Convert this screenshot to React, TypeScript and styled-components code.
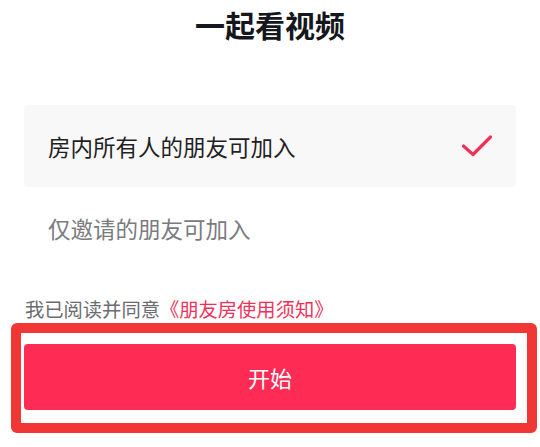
import React, { useState } from 'react';
import styled, { createGlobalStyle } from 'styled-components';

const GlobalStyle = createGlobalStyle`
    html, body {
        margin: 0;
        padding: 0;
        background: #ffffff;
    }
    body {
        font-family: "Noto Sans CJK SC", "Noto Sans", sans-serif;
    }
`;

const Page = styled.div`
    width: 540px;
    min-height: 447px;
    box-sizing: border-box;
    padding: 0 24px 37px;
`;

const Title = styled.h1`
    margin: 0;
    height: 48px;
    line-height: 48px;
    font-size: 30px;
    font-weight: 700;
    text-align: center;
    color: #16171d;
`;

const OptionList = styled.div`
    margin-top: 57px;
    display: flex;
    flex-direction: column;
`;

const Option = styled.div<{ $active: boolean }>`
    height: 82px;
    display: flex;
    align-items: center;
    justify-content: space-between;
    padding: 0 23px 0 24px;
    border-radius: 4px;
    background: ${p => (p.$active ? '#f8f8f8' : 'transparent')};
    color: ${p => (p.$active ? '#1f1f24' : '#7b7b80')};
    font-size: 22.5px;
    line-height: 1;
    cursor: pointer;
`;

const Agreement = styled.p`
    margin: 28px 0 0 1px;
    font-size: 19.3px;
    line-height: 24px;
    color: #6b6b70;
`;

const Link = styled.span`
    color: #f0325a;
`;

const ButtonWrap = styled.div`
    position: relative;
    margin-top: 23px;
`;

const StartButton = styled.button`
    display: block;
    width: 100%;
    height: 66px;
    border: none;
    border-radius: 4px;
    background: #fe2c55;
    color: #ffffff;
    font-family: inherit;
    font-size: 22px;
    cursor: pointer;
`;

const Highlight = styled.div`
    position: absolute;
    left: -13px;
    right: -21px;
    top: -21px;
    bottom: -23px;
    border: 10px solid #f23535;
    border-radius: 6px;
    pointer-events: none;
`;

function Check() {
    return (
        <svg width="32" height="24" viewBox="0 0 32 24" fill="none">
            <polyline
                points="2.5,12 12,20.5 29.5,3"
                stroke="#f0325a"
                strokeWidth="3.2"
                strokeLinecap="round"
                strokeLinejoin="round"
            />
        </svg>
    );
}

const options = ['房内所有人的朋友可加入', '仅邀请的朋友可加入'];

export default function App() {
    const [selected, setSelected] = useState(0);

    return (
        <Page>
            <GlobalStyle />
            <Title>一起看视频</Title>
            <OptionList>
                {options.map((label, i) => (
                    <Option key={label} $active={i === selected} onClick={() => setSelected(i)}>
                        <span>{label}</span>
                        {i === selected && <Check />}
                    </Option>
                ))}
            </OptionList>
            <Agreement>
                我已阅读并同意<Link>《朋友房使用须知》</Link>
            </Agreement>
            <ButtonWrap>
                <StartButton>开始</StartButton>
                <Highlight />
            </ButtonWrap>
        </Page>
    );
}
